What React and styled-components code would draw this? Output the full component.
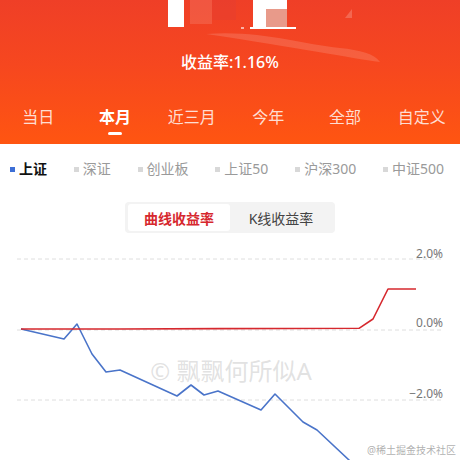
import React, { useState } from 'react';
import styled, { createGlobalStyle } from 'styled-components';

const GlobalStyle = createGlobalStyle`
  html, body {
    margin: 0;
    padding: 0;
    background: #ffffff;
    overflow: hidden;
  }
  body {
    font-family: "Noto Sans", "Noto Sans CJK SC", sans-serif;
  }
`;

const tabs = ['当日', '本月', '近三月', '今年', '全部', '自定义'];
const indexes = ['上证', '深证', '创业板', '上证50', '沪深300', '中证500'];

// chart coords are page y - 240
const redLine = [
  [21, 89], [120, 89], [220, 88.6], [359, 88.3], [373, 79], [388, 49], [416, 49],
];
const blueLine = [
  [21, 89], [64, 99], [77, 84], [92, 114], [106, 132], [120, 130], [177, 156],
  [191, 145], [204, 155], [218, 151], [261, 170], [275, 154], [303, 182],
  [317, 190], [349, 220], [370, 240],
];

const toPoints = (pts) => pts.map((p) => p.join(',')).join(' ');

const App = () => {
  const [tab, setTab] = useState(1);
  const [index, setIndex] = useState(0);
  const [mode, setMode] = useState(0);

  return (
    <>
      <GlobalStyle />
      <Page>
        <Header>
          <Swoosh viewBox='0 0 460 144' preserveAspectRatio='none'>
            <path
              d='M206 34 C 260 30, 300 44, 340 48 C 360 50, 375 54, 380 62 C 350 58, 300 48, 206 34 Z'
              fill='rgba(255,255,255,0.14)'
            />
            <path d='M345 18 L352 9 L352 18 Z' fill='rgba(255,255,255,0.2)' />
          </Swoosh>
          <Mosaic viewBox='0 0 460 32'>
            <rect x='168' y='0' width='16' height='27' fill='#ffffff' />
            <rect x='190' y='0' width='22' height='24' fill='rgba(255,255,255,0.12)' />
            <rect x='212' y='0' width='24' height='20' fill='rgba(220,60,60,0.25)' />
            <rect x='253' y='0' width='34' height='9' fill='#ffffff' />
            <rect x='253' y='9' width='13' height='18' fill='#ffffff' />
            <rect x='266' y='9' width='21' height='18' fill='#e89a8a' />
            <rect x='250' y='27' width='46' height='2' fill='#ffffff' />
            <rect x='241' y='27' width='3' height='2' fill='rgba(255,255,255,0.6)' />
          </Mosaic>
          <Rate>收益率:1.16%</Rate>
          <Tabs>
            {tabs.map((t, i) => (
              <Tab key={t} $active={tab === i} onClick={() => setTab(i)}>
                {t}
              </Tab>
            ))}
          </Tabs>
        </Header>

        <Legend>
          {indexes.map((name, i) => (
            <LegendItem key={name} $active={index === i} onClick={() => setIndex(i)}>
              <Dot $active={index === i} />
              {name}
            </LegendItem>
          ))}
        </Legend>

        <SegmentWrap>
          <Segment>
            <SegButton $active={mode === 0} onClick={() => setMode(0)}>
              曲线收益率
            </SegButton>
            <SegButton $active={mode === 1} onClick={() => setMode(1)}>
              K线收益率
            </SegButton>
          </Segment>
        </SegmentWrap>

        <Chart viewBox='0 0 460 240'>
          {[19, 90, 160].map((y) => (
            <line
              key={y}
              x1='17'
              x2='443'
              y1={y}
              y2={y}
              stroke='#dedede'
              strokeWidth='1'
              strokeDasharray='4 3'
            />
          ))}
          <AxisLabel x='443' y='18'>2.0%</AxisLabel>
          <AxisLabel x='443' y='87'>0.0%</AxisLabel>
          <AxisLabel x='443' y='158'>−2.0%</AxisLabel>
          <AxisLabel x='443' y='230'>−4.0%</AxisLabel>
          <Watermark x='231' y='140'>© 飘飘何所似A</Watermark>
          <polyline
            points={toPoints(blueLine)}
            fill='none'
            stroke='#4a74c9'
            strokeWidth='1.6'
            strokeLinejoin='round'
          />
          <polyline
            points={toPoints(redLine)}
            fill='none'
            stroke='#d6282e'
            strokeWidth='1.6'
            strokeLinejoin='round'
          />
          <Credit x='456' y='214'>@稀土掘金技术社区</Credit>
        </Chart>
      </Page>
    </>
  );
};

export default App;

const Page = styled.div`
  width: 460px;
  height: 460px;
  overflow: hidden;
  background: #ffffff;
`;

const Header = styled.div`
  position: relative;
  height: 144px;
  background: linear-gradient(180deg, #ef3f27 0%, #f6471f 45%, #ff5511 100%);
  display: flex;
  flex-direction: column;
`;

const Swoosh = styled.svg`
  position: absolute;
  left: 0;
  top: 0;
  width: 460px;
  height: 144px;
`;

const Mosaic = styled.svg`
  position: relative;
  display: block;
  width: 460px;
  height: 32px;
`;

const Rate = styled.div`
  position: relative;
  margin-top: 20px;
  text-align: center;
  color: #ffffff;
  font-size: 16px;
  line-height: 20px;
  font-weight: 500;
`;

const Tabs = styled.div`
  position: relative;
  margin-top: 34px;
  display: grid;
  grid-template-columns: repeat(6, 1fr);
`;

const Tab = styled.div`
  display: flex;
  flex-direction: column;
  align-items: center;
  font-size: 16px;
  line-height: 22px;
  color: ${(p) => (p.$active ? '#ffffff' : 'rgba(255,255,255,0.82)')};
  font-weight: ${(p) => (p.$active ? 600 : 400)};
  cursor: pointer;

  &::after {
    content: '';
    width: 14px;
    height: 3px;
    margin-top: 4px;
    border-radius: 2px;
    background: ${(p) => (p.$active ? '#ffffff' : 'transparent')};
  }
`;

const Legend = styled.div`
  display: flex;
  justify-content: space-between;
  padding: 15px 16px 0 10px;
`;

const LegendItem = styled.div`
  display: flex;
  align-items: center;
  gap: 4px;
  font-size: 14px;
  line-height: 20px;
  color: ${(p) => (p.$active ? '#111111' : '#9a9a9a')};
  font-weight: ${(p) => (p.$active ? 600 : 400)};
  cursor: pointer;
`;

const Dot = styled.span`
  width: 5px;
  height: 5px;
  background: ${(p) => (p.$active ? '#3d6fd6' : '#d8d8d8')};
`;

const SegmentWrap = styled.div`
  display: flex;
  justify-content: center;
  margin-top: 23px;
`;

const Segment = styled.div`
  display: flex;
  width: 210px;
  height: 31px;
  padding: 2px 3px;
  box-sizing: border-box;
  background: #f3f3f3;
  border-radius: 4px;
`;

const SegButton = styled.div`
  flex: 1;
  display: flex;
  align-items: center;
  justify-content: center;
  border-radius: 3px;
  font-size: 14px;
  background: ${(p) => (p.$active ? '#ffffff' : 'transparent')};
  color: ${(p) => (p.$active ? '#d6282e' : '#444444')};
  font-weight: ${(p) => (p.$active ? 600 : 400)};
  cursor: pointer;
`;

const Chart = styled.svg`
  display: block;
  margin-top: 7px;
  width: 460px;
  height: 240px;
`;

const AxisLabel = styled.text`
  font-size: 12px;
  fill: #777777;
  text-anchor: end;
`;

const Watermark = styled.text`
  font-size: 24px;
  fill: rgba(190, 190, 190, 0.45);
  text-anchor: middle;
`;

const Credit = styled.text`
  font-size: 10px;
  fill: rgba(150, 150, 150, 0.75);
  text-anchor: end;
`;
